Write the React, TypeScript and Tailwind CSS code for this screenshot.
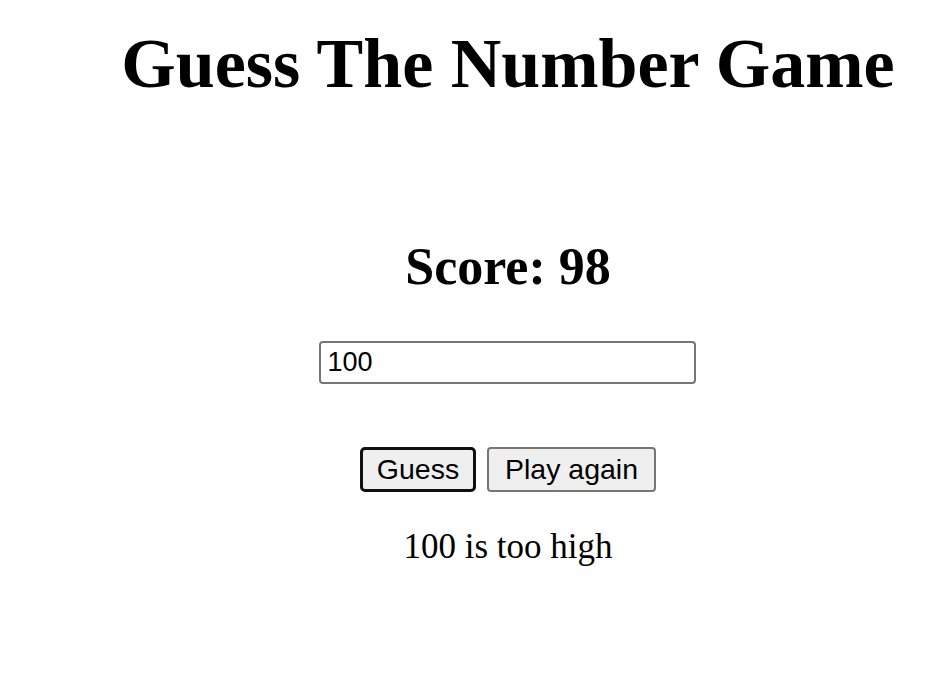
export default function App() {
  return (
    <div className="flex min-h-screen flex-col items-center bg-white pl-[73px] text-black">
      <h1 className="mt-[29px] text-[70px] font-bold leading-[70px] whitespace-nowrap font-['Liberation_Serif',serif]">
        Guess The Number Game
      </h1>

      <h2 className="mt-[142px] text-[52px] font-bold leading-[52px] font-['Liberation_Serif',serif]">Score: 98</h2>

      <input
        type="text"
        defaultValue="100"
        className="mt-[48px] ml-[-2px] h-[43px] w-[377px] rounded-[4px] border-2 border-[#767676] bg-white px-[7px] text-[27px] text-black outline-none font-['Liberation_Sans',Arial,sans-serif]"
      />

      <div className="mt-[63px] flex gap-[11px]">
        <button className="flex h-[45px] w-[116px] items-center justify-center rounded-[5px] border-[3px] border-[#101010] bg-[#efefef] text-[28.5px] font-['Liberation_Sans',Arial,sans-serif]">
          Guess
        </button>
        <button className="flex h-[45px] w-[169px] items-center justify-center rounded-[4px] border-2 border-[#767676] bg-[#efefef] text-[28.5px] font-['Liberation_Sans',Arial,sans-serif]">
          Play again
        </button>
      </div>

      <p className="mt-[37px] text-[35px] leading-[35px] font-['Liberation_Serif',serif]">100 is too high</p>
    </div>
  )
}
